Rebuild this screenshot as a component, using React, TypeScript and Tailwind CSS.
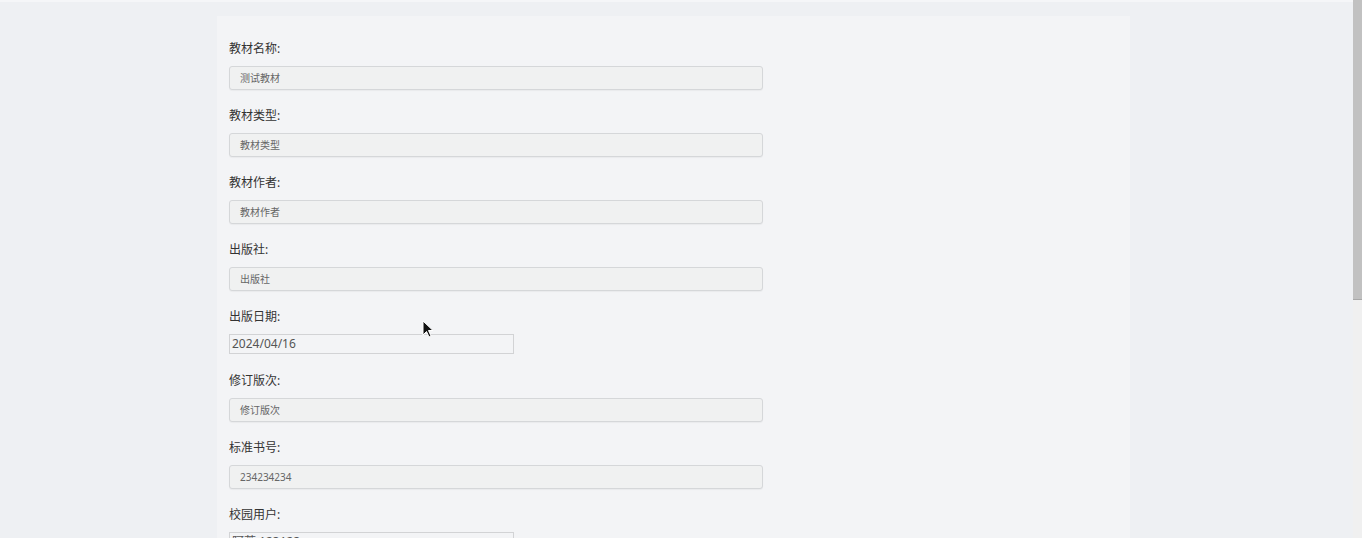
const fields = [
  { label: "教材名称:", value: "测试教材" },
  { label: "教材类型:", value: "教材类型" },
  { label: "教材作者:", value: "教材作者" },
  { label: "出版社:", value: "出版社" },
];

const fields2 = [
  { label: "修订版次:", value: "修订版次" },
  { label: "标准书号:", value: "234234234" },
];

function TextField({ label, value }: { label: string; value: string }) {
  return (
    <div className="mb-[15px]">
      <label className="block h-5 pt-[1px] leading-5 text-[12px] text-[#333]">{label}</label>
      <div className="mt-2 h-6 w-[534px] rounded-[3px] border border-[#d5d7d9] bg-[#f0f1f1] pl-[10px] text-[10px] leading-[22px] text-[#666] shadow-[0_1px_1px_rgba(0,0,0,0.04)]">
        {value}
      </div>
    </div>
  );
}

function SmallField({ label, value }: { label: string; value: string }) {
  return (
    <div className="mb-4">
      <label className="block h-5 pt-[1px] leading-5 text-[12px] text-[#333]">{label}</label>
      <div className="mt-2 h-5 w-[285px] border border-[#d2d3d5] bg-[#f3f4f6] pl-[2px] text-[12px] leading-[18px] text-[#555]">
        {value}
      </div>
    </div>
  );
}

export default function App() {
  return (
    <div
      className="flex h-[538px] overflow-hidden bg-[#eef0f3]"
      style={{ fontFamily: '"Noto Sans", "Noto Sans CJK SC", sans-serif' }}
    >
      <div className="relative flex-1 overflow-hidden">
        <div className="h-[2px] bg-[#f5f6f8]" />
        <div className="ml-[217px] mt-[14px] h-[600px] w-[913px] bg-[#f3f4f6] px-3 pt-[22px]">
          {fields.map((f) => (
            <TextField key={f.label} {...f} />
          ))}
          <SmallField label="出版日期:" value="2024/04/16" />
          {fields2.map((f) => (
            <TextField key={f.label} {...f} />
          ))}
          <SmallField label="校园用户:" value="阿蒂 123123" />
        </div>
        <svg
          className="absolute left-[422px] top-[320px]"
          width="12"
          height="18"
          viewBox="0 0 12 18"
        >
          <path d="M1 1 L1 15 L4.5 11.5 L7 17 L9 16 L6.5 10.5 L11 10.5 Z" fill="#111" stroke="#fff" strokeWidth="1" />
        </svg>
      </div>
      <div className="flex w-[9px] flex-col bg-[#f0f0f0]">
        <div className="h-[300px] bg-[#c1c1c1] border-b border-[#a8a8a8]" />
      </div>
    </div>
  );
}
